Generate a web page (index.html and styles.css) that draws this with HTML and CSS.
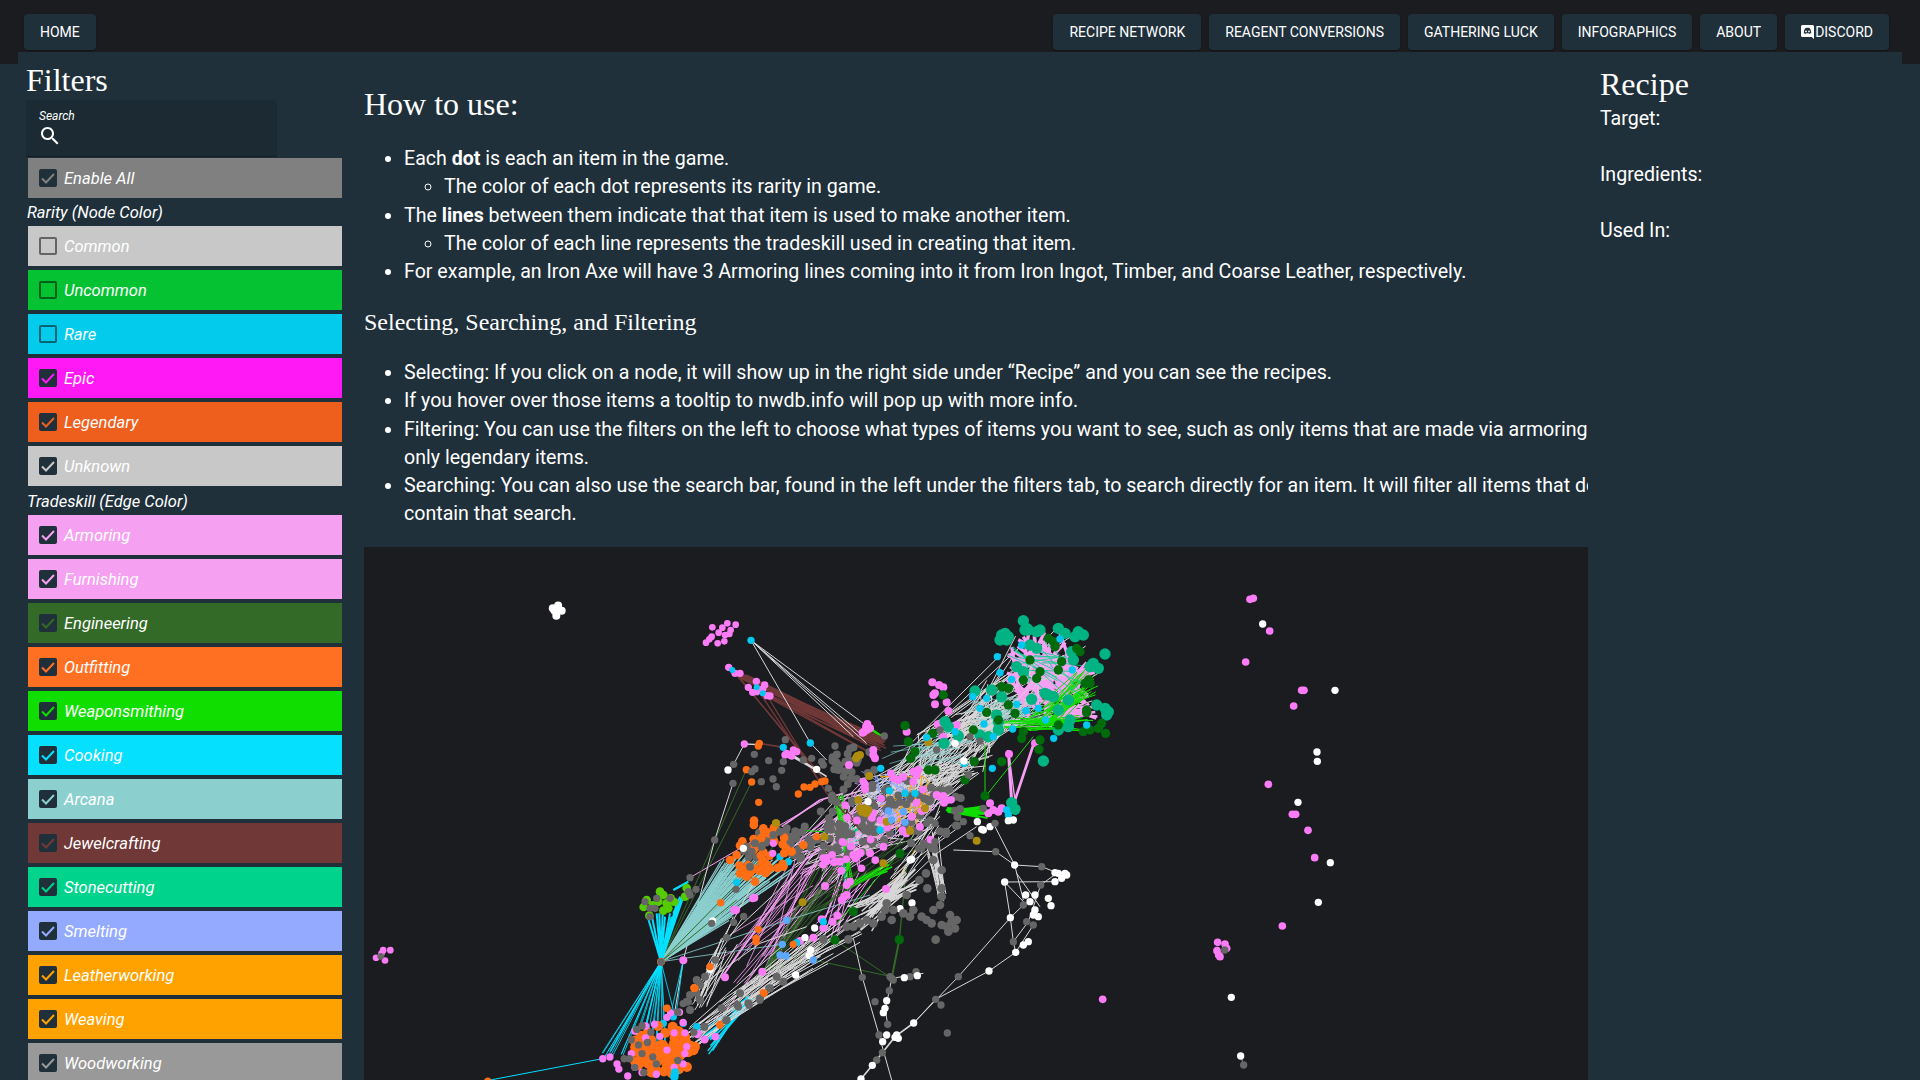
FILE: index.html
```html
<!DOCTYPE html>
<html lang="en">
<head>
<meta charset="utf-8">
<title>Recipe Network</title>
<link rel="stylesheet" href="styles.css">
</head>
<body>
<header class="topbar">
  <a class="navbtn">Home</a>
  <nav class="navgroup">
    <a class="navbtn">Recipe Network</a>
    <a class="navbtn">Reagent Conversions</a>
    <a class="navbtn">Gathering Luck</a>
    <a class="navbtn">Infographics</a>
    <a class="navbtn">About</a>
    <a class="navbtn"><svg class="discord" viewBox="0 0 14 14"><path class="discord-bg" d="M1.5 0h10A1.5 1.5 0 0 1 13 1.5V14l-2.4-2H1.5A1.5 1.5 0 0 1 0 10.5v-9A1.5 1.5 0 0 1 1.5 0z"/><path class="discord-face" d="M4.2 3.2c1.5-.5 3.1-.5 4.6 0 .9 1.300 1.400 2.900 1.400 4.800-.7.500-1.400.800-2 1l-.5-.8H5.300l-.5.8c-.7-.2-1.400-.5-2-1 0-1.900.5-3.500 1.400-4.800z"/><circle class="discord-bg" cx="5" cy="6.400" r=".9"/><circle class="discord-bg" cx="8" cy="6.400" r=".9"/></svg>Discord</a>
  </nav>
</header>
<div class="layout">
  <aside class="filters">
    <h2 class="title">Filters</h2>
    <div class="search">
      <span class="search-label">Search</span>
      <svg class="search-icon" viewBox="0 0 24 24"><path d="M15.500 14h-.79l-.28-.27C15.410 12.590 16 11.110 16 9.500 16 5.910 13.090 3 9.500 3S3 5.910 3 9.500 5.910 16 9.500 16c1.610 0 3.090-.59 4.230-1.570l.27.28v.79l5 4.990L20.490 19l-4.990-5zm-6 0C7.010 14 5 11.990 5 9.500S7.010 5 9.500 5 14 7.010 14 9.500 11.990 14 9.500 14z"/></svg>
    </div>
    <div class="row c-all"><span class="box on"><svg viewBox="0 0 18 18"><path d="M3 9.500l4 4 8-8.500"/></svg></span>Enable All</div>
    <div class="group-label">Rarity (Node Color)</div>
    <div class="group">
      <div class="row c-common"><span class="box"></span>Common</div>
      <div class="row c-uncommon"><span class="box"></span>Uncommon</div>
      <div class="row c-rare"><span class="box"></span>Rare</div>
      <div class="row c-epic"><span class="box on"><svg viewBox="0 0 18 18"><path d="M3 9.500l4 4 8-8.500"/></svg></span>Epic</div>
      <div class="row c-legendary"><span class="box on"><svg viewBox="0 0 18 18"><path d="M3 9.500l4 4 8-8.500"/></svg></span>Legendary</div>
      <div class="row c-common"><span class="box on"><svg viewBox="0 0 18 18"><path d="M3 9.500l4 4 8-8.500"/></svg></span>Unknown</div>
    </div>
    <div class="group-label second">Tradeskill (Edge Color)</div>
    <div class="group">
      <div class="row c-armoring"><span class="box on"><svg viewBox="0 0 18 18"><path d="M3 9.500l4 4 8-8.500"/></svg></span>Armoring</div>
      <div class="row c-armoring"><span class="box on"><svg viewBox="0 0 18 18"><path d="M3 9.500l4 4 8-8.500"/></svg></span>Furnishing</div>
      <div class="row c-engineering"><span class="box on"><svg viewBox="0 0 18 18"><path d="M3 9.500l4 4 8-8.500"/></svg></span>Engineering</div>
      <div class="row c-outfitting"><span class="box on"><svg viewBox="0 0 18 18"><path d="M3 9.500l4 4 8-8.500"/></svg></span>Outfitting</div>
      <div class="row c-weapon"><span class="box on"><svg viewBox="0 0 18 18"><path d="M3 9.500l4 4 8-8.500"/></svg></span>Weaponsmithing</div>
      <div class="row c-cooking"><span class="box on"><svg viewBox="0 0 18 18"><path d="M3 9.500l4 4 8-8.500"/></svg></span>Cooking</div>
      <div class="row c-arcana"><span class="box on"><svg viewBox="0 0 18 18"><path d="M3 9.500l4 4 8-8.500"/></svg></span>Arcana</div>
      <div class="row c-jewel"><span class="box on"><svg viewBox="0 0 18 18"><path d="M3 9.500l4 4 8-8.500"/></svg></span>Jewelcrafting</div>
      <div class="row c-stone"><span class="box on"><svg viewBox="0 0 18 18"><path d="M3 9.500l4 4 8-8.500"/></svg></span>Stonecutting</div>
      <div class="row c-smelting"><span class="box on"><svg viewBox="0 0 18 18"><path d="M3 9.500l4 4 8-8.500"/></svg></span>Smelting</div>
      <div class="row c-leather"><span class="box on"><svg viewBox="0 0 18 18"><path d="M3 9.500l4 4 8-8.500"/></svg></span>Leatherworking</div>
      <div class="row c-leather"><span class="box on"><svg viewBox="0 0 18 18"><path d="M3 9.500l4 4 8-8.500"/></svg></span>Weaving</div>
      <div class="row c-wood"><span class="box on"><svg viewBox="0 0 18 18"><path d="M3 9.500l4 4 8-8.500"/></svg></span>Woodworking</div>
    </div>
  </aside>
  <main class="content">
    <div class="help">
      <h1 class="title help-title">How to use:</h1>
      <ul>
        <li>Each <b>dot</b> is each an item in the game.
          <ul><li>The color of each dot represents its rarity in game.</li></ul>
        </li>
        <li>The <b>lines</b> between them indicate that that item is used to make another item.
          <ul><li>The color of each line represents the tradeskill used in creating that item.</li></ul>
        </li>
        <li>For example, an Iron Axe will have 3 Armoring lines coming into it from Iron Ingot, Timber, and Coarse Leather, respectively.</li>
      </ul>
      <h3 class="subtitle">Selecting, Searching, and Filtering</h3>
      <ul class="second-list">
        <li>Selecting: If you click on a node, it will show up in the right side under “Recipe” and you can see the recipes.</li>
        <li>If you hover over those items a tooltip to nwdb.info will pop up with more info.</li>
        <li>Filtering: You can use the filters on the left to choose what types of items you want to see, such as only items that are made via armoring or only legendary items.</li>
        <li>Searching: You can also use the search bar, found in the left under the filters tab, to search directly for an item. It will filter all items that do not contain that search.</li>
      </ul>
    </div>
    <svg id="graph" class="graph" viewBox="-828 -99 3672 1599" preserveAspectRatio="xMinYMin slice"></svg>
  </main>
  <aside class="recipe">
    <h2 class="title recipe-title">Recipe</h2>
    <p>Target:</p>
    <p>Ingredients:</p>
    <p>Used In:</p>
  </aside>
</div>
<script src="graph.js"></script>
</body>
</html>
```
FILE: styles.css
```css
* { box-sizing: border-box; }
html, body { margin: 0; height: 100%; overflow: hidden; }
body {
  background: #1f303b;
  color: #fff;
  font-family: Roboto, "Liberation Sans", sans-serif;
}
.topbar {
  height: 64px;
  background: #1b1c20;
  display: flex;
  justify-content: space-between;
  align-items: flex-start;
  padding: 14px 31px 0 24px;
}
.navgroup { display: flex; gap: 8px; }
.navbtn {
  height: 36px;
  display: flex;
  align-items: center;
  padding: 0 16px;
  background: #1f303b;
  border-radius: 4px;
  font-size: 14px;
  font-weight: 400;
  text-transform: uppercase;
  box-shadow: 0 1px 2px rgba(0, 0, 0, .3);
}
.discord { width: 14px; height: 14px; }
.discord-bg { fill: #fff; }
.discord-face { fill: #1f303b; }
.layout {
  margin: -12px 18px 0;
  height: 1028px;
  background: #1f303b;
  display: grid;
  grid-template-columns: 346px 1224px 1fr;
}
.title {
  font-family: "Liberation Serif", serif;
  font-size: 32px;
  font-weight: 400;
  line-height: 37px;
  margin: 0;
}
.filters { padding: 10px 0 0 8px; }
.search {
  width: 251px;
  height: 57px;
  margin-top: 1px;
  padding: 8px 0 0 13px;
  background: #1b2a33;
  border-bottom: 1px solid #121c23;
  border-radius: 4px 4px 0 0;
}
.search-label { display: block; font-size: 12px; font-style: italic; line-height: 16px; }
.search-icon { display: block; width: 24px; height: 24px; margin: 0 0 0 -1px; fill: #fff; }
.row {
  width: 314px;
  height: 40px;
  margin-left: 2px;
  padding-left: 11px;
  display: flex;
  align-items: center;
  gap: 7px;
  font-size: 16.5px;
  font-style: italic;
  background: var(--c);
  color: #fff;
}
.search + .row { margin-top: 1px; }
.group { display: flex; flex-direction: column; gap: 4px; }
.group-label { margin-left: 1px; height: 28px; font-size: 16.5px; font-style: italic; line-height: 30px; }
.group-label.second { height: 29px; line-height: 31px; }
.box {
  flex: none;
  width: 18px;
  height: 18px;
  border-radius: 2px;
  border: 2px solid rgba(0, 0, 0, .5);
}
.box.on { border: 0; background: #1f303b; }
.box svg { display: block; width: 18px; height: 18px; fill: none; stroke: var(--c); stroke-width: 2; }
.c-all { --c: #808080; }
.c-common { --c: #c8c8c8; }
.c-uncommon { --c: #05c233; }
.c-rare { --c: #02cbec; }
.c-epic { --c: #ff1af5; }
.c-legendary { --c: #ee5e1c; }
.c-armoring { --c: #f6a0f2; }
.c-engineering { --c: #336a27; }
.c-outfitting { --c: #ff7022; }
.c-weapon { --c: #10dd00; }
.c-cooking { --c: #05e0ff; }
.c-arcana { --c: #8bcfcf; }
.c-jewel { --c: #713838; }
.c-stone { --c: #00d48c; }
.c-smelting { --c: #94aaff; }
.c-leather { --c: #ffa200; }
.c-wood { --c: #999999; }
.content { overflow: hidden; min-width: 0; }
.help { width: 1278px; font-size: 19.6px; line-height: 28.3px; }
.help-title { margin: 34px 0 0; }
.help ul { margin: 0; padding-left: 40px; }
.help > ul { margin: 22px 0 22px; }
.help > ul.second-list { margin: 22.500px 0 0; }
.subtitle {
  font-family: "Liberation Serif", serif;
  font-size: 24px;
  font-weight: 400;
  line-height: 28px;
  margin: 0;
}
.graph { display: block; width: 1224px; height: 533px; background: #1b1c20; margin-top: 18px; }
.recipe { padding: 14px 0 0 12px; }
.recipe-title { margin-bottom: 2px; }
.recipe p { margin: 0 0 27.7px; font-size: 19.6px; line-height: 28.3px; }
```
FILE: graph.js
```js
(function () {
  var svg = document.getElementById('graph');
  var NS = 'http://www.w3.org/2000/svg';
  var seed = 12345;
  function R() {
    seed |= 0; seed = seed + 0x6D2B79F5 | 0;
    var t = Math.imul(seed ^ seed >>> 15, 1 | seed);
    t = t + Math.imul(t ^ t >>> 7, 61 | t) ^ t;
    return ((t ^ t >>> 14) >>> 0) / 4294967296;
  }
  var N = { pink: '#fb7cf6', white: '#ffffff', gray: '#666666', orange: '#ff6e14', cyan: '#00c8f0', green: '#006b0b', teal: '#00b383', lime: '#55cc00', gold: '#ad8c0e', blue: '#5aa8ff' };
  var E = { white: '#d8d8d8', pink: '#f5a0f2', lime: '#10dd00', cyan: '#05e0ff', arcana: '#8bcfcf', brown: '#713838', dgreen: '#336a27', orange: '#ffa200', peri: '#94aaff', stone: '#00d48c' };
  var nodes = [], edges = [];
  function pts(c, list, r) { list.forEach(function (p) { nodes.push([p[0], p[1], N[c], r || 11.5]); }); }
  function inEll(g) {
    var a = R() * 6.283, d = Math.sqrt(R());
    return [g[0] + Math.cos(a) * d * g[2], g[1] + Math.sin(a) * d * g[3]];
  }
  function blob(c, n, g, r) { for (var i = 0; i < n; i++) { var p = inEll(g); nodes.push([p[0], p[1], N[c], r || 11.5]); } }
  function fan(c, w, n, A, B) {
    for (var i = 0; i < n; i++) {
      var a = inEll(A), b = inEll(B);
      edges.push([a[0], a[1], b[0], b[1], E[c], w]);
    }
  }
  function path(c, w, list) {
    for (var i = 0; i < list.length - 1; i++) edges.push([list[i][0], list[i][1], list[i + 1][0], list[i + 1][1], E[c], w]);
  }
  function z3(l) { return l.map(function (p) { return [p[0] * 1.071 - 840, p[1] * 1.034 - 120]; }); }
  function z6(l) { return l.map(function (p) { return [p[0] + 1380, p[1] - 60]; }); }

  var right = [1220, 300, 175, 160], midR = [930, 520, 130, 90], cen = [740, 690, 170, 110], left = [560, 830, 120, 80];

  /* ---- edges ---- */
  fan('white', 3, 42, midR, right);
  fan('white', 3, 60, [960, 470, 80, 70], [1100, 360, 90, 80]);
  fan('arcana', 2, 22, [1050, 400, 80, 60], [1250, 380, 80, 70]);
  fan('pink', 10, 70, [1210, 270, 115, 125], [1230, 320, 125, 115]);
  fan('pink', 8, 14, [1340, 395, 50, 25], [1250, 400, 50, 30]);
  fan('pink', 8, 8, [1340, 260, 40, 25], [1270, 310, 40, 30]);
  fan('white', 2.5, 12, [1160, 330, 90, 90], [1220, 250, 90, 70]);
  fan('lime', 3, 32, [1210, 420, 60, 30], [1340, 310, 35, 60]);
  fan('lime', 3, 20, [1140, 430, 60, 30], [1320, 430, 50, 25]);
  fan('stone', 2.5, 18, [1240, 300, 100, 100], [1160, 230, 70, 70]);
  fan('white', 3, 85, cen, midR);
  fan('white', 3, 60, cen, left);
  fan('arcana', 2, 20, [800, 540, 80, 50], [960, 500, 80, 60]);
  fan('peri', 2.5, 30, [720, 640, 130, 90], [780, 700, 130, 70]);
  fan('orange', 3, 18, [820, 640, 100, 50], [780, 720, 60, 60]);
  path('orange', 3, [[720, 590], [770, 590], [850, 590], [890, 630], [840, 660], [790, 650], [720, 680]]);
  path('orange', 3, [[830, 590], [800, 640]]); path('orange', 3, [[845, 585], [840, 650]]);
  path('orange', 3, [[800, 860], [740, 930]]); path('orange', 3, [[830, 800], [760, 920]]); path('orange', 3, [[720, 740], [700, 790]]);
  fan('stone', 2.5, 20, [640, 740, 50, 30], [620, 790, 40, 30]);
  fan('stone', 2.5, 8, [610, 860, 10, 40], [620, 920, 8, 10]);
  fan('pink', 3, 36, cen, left);
  fan('pink', 2.5, 22, [330, 1130, 90, 100], [530, 870, 90, 60]);
  fan('pink', 3, 12, [560, 1050, 40, 40], [650, 880, 60, 60]);
  fan('pink', 2.5, 6, [250, 1190, 5, 5], [510, 810, 30, 30]);
  path('pink', 3, [[150, 893], [360, 770], [550, 660]]);
  path('pink', 5, [[425, 740], [540, 660], [610, 640]]);
  path('pink', 3, [[230, 1330], [560, 880]]);
  path('pink', 9, [[1105, 510], [1115, 665]]); path('pink', 8, [[1185, 480], [1125, 660]]); path('pink', 4, [[1105, 510], [1125, 660]]);
  fan('lime', 5, 16, [925, 690, 8, 8], [1030, 695, 22, 28]);
  fan('lime', 5, 8, [615, 925, 10, 8], [740, 860, 18, 14]);
  fan('lime', 3, 8, [640, 910, 20, 15], [580, 650, 30, 20]);
  path('lime', 8, [[690, 445], [725, 470]]);
  path('lime', 3, [[1035, 495], [1035, 645]]); path('lime', 3, [[1180, 470], [1040, 645]]);
  path('lime', 3, [[590, 1030], [760, 840]]); path('lime', 3, [[470, 750], [620, 760]]);
  fan('dgreen', 2.5, 14, [375, 1170, 6, 6], [600, 860, 70, 70]);
  fan('dgreen', 2.5, 6, [480, 1000, 40, 40], [800, 800, 50, 40]);
  path('dgreen', 3, [[375, 1172], [520, 1140], [755, 1190]]);
  path('dgreen', 3, [[375, 1172], [585, 1080], [755, 1195]]);
  path('dgreen', 6, [[778, 1079], [755, 1195]]);
  path('dgreen', 4, [[778, 1079], [800, 850]]);
  path('dgreen', 3, [[63, 1145], [319, 569]]); path('dgreen', 3, [[63, 1145], [335, 606]]);
  path('brown', 4, [[285, 280], [530, 570], [670, 760]]);
  path('brown', 4, [[292, 285], [500, 540]]);
  path('brown', 4, [[380, 345], [560, 640], [665, 755]]);
  path('brown', 4, [[360, 340], [535, 600]]);
  fan('brown', 5, 12, [310, 290, 15, 8], [720, 490, 50, 16]);
  fan('brown', 4, 6, [370, 335, 15, 12], [700, 500, 40, 30]);
  path('brown', 5, [[358, 490], [430, 502]]);
  path('white', 3, [[333, 181], [670, 430]]); path('white', 3, [[333, 181], [660, 460]]); path('white', 3, [[333, 181], [680, 490]]);
  path('white', 3, [[333, 181], [511, 489], [560, 540]]); path('white', 3, [[333, 181], [640, 470]]);
  path('white', 3, [[313, 492], [281, 553], [264, 570]]); path('white', 4, [[313, 492], [358, 494]]);
  path('white', 7, [[450, 525], [530, 570]]); path('white', 5, [[450, 520], [560, 590]]);
  path('white', 3, [[279, 610], [224, 780], [130, 1140], [100, 1320]]);
  fan('arcana', 3.5, 75, [63, 1145, 1, 1], [350, 860, 115, 55]);
  fan('arcana', 3.5, 18, [63, 1145, 1, 1], [225, 990, 65, 45]);
  path('dgreen', 3, [[63, 1145], [290, 960]]); path('dgreen', 3, [[63, 1145], [400, 800]]);
  path('arcana', 2.5, [[63, 1145], [440, 1021], [690, 945]]);
  path('arcana', 2.5, [[63, 1145], [427, 1093]]);
  [[20, 1000], [35, 1005], [50, 1000], [58, 1000], [68, 1000], [75, 1010], [90, 1000], [95, 1010], [105, 990], [115, 970], [125, 950], [132, 945]].forEach(function (p) {
    edges.push([63, 1145, p[0], p[1], E.cyan, 6]);
  });
  path('cyan', 7, [[100, 930], [145, 905]]); path('cyan', 5, [[120, 950], [100, 1000]]);
  fan('cyan', 2.5, 24, [63, 1145, 1, 1], [0, 1420, 115, 15]);
  path('cyan', 2.5, [[130, 1140], [95, 1290]]); path('cyan', 2.5, [[130, 1140], [110, 1290]]); path('cyan', 2.5, [[63, 1145], [100, 1290]]);
  path('cyan', 3, [[-470, 1504], [-112, 1436]]);
  path('cyan', 3, [[-108, 1434], [63, 1150]]);
  fan('cyan', 4, 12, [200, 1390, 40, 35], [330, 1260, 10, 16]);
  fan('white', 3, 22, [150, 1380, 30, 40], [500, 1120, 90, 60]);
  fan('white', 3, 16, [290, 1260, 60, 30], [620, 1050, 60, 50]);
  fan('white', 3, 14, [180, 1270, 24, 40], [260, 1120, 40, 60]);
  path('white', 3, [[150, 1240], [360, 1090], [500, 1040]]);
  path('white', 3, [[180, 1260], [280, 1010]]); path('white', 3, [[200, 1160], [280, 1020], [340, 910]]);
  path('white', 3, [[260, 1075], [470, 880]]); path('white', 3, [[150, 1250], [310, 1010]]);
  fan('white', 4, 30, [670, 1010, 60, 50], [810, 900, 40, 40]);
  fan('white', 3, 20, [880, 800, 20, 50], [905, 940, 15, 30]);
  fan('white', 3, 12, [760, 880, 50, 40], [910, 720, 70, 40]);
  path('white', 3, [[640, 1075], [667, 1192], [717, 1365], [755, 1500]]);
  path('white', 3, [[700, 1000], [890, 820], [1010, 740]]);
  path('white', 3, [[940, 810], [1067, 815], [1124, 855]]);
  path('white', 3, [[1060, 730], [1124, 855], [1205, 860], [1255, 880]]);
  path('white', 3, [[1124, 855], [1150, 960]]); path('white', 3, [[1094, 906], [1245, 905]]);
  path('white', 3, [[1094, 906], [1111, 1013], [1120, 1085], [1127, 1117]]);
  path('white', 3, [[1094, 906], [1160, 975]]); path('white', 3, [[1130, 880], [1200, 980]]);
  path('white', 3, [[1202, 915], [1165, 1025], [1120, 1085]]);
  path('white', 3, [[1150, 975], [1111, 1013], [955, 1190], [821, 1329]]);
  path('white', 3, [[1180, 1035], [1127, 1117], [1047, 1173], [887, 1258], [821, 1329]]);
  path('white', 5, [[821, 1329], [765, 1370], [727, 1418], [697, 1456], [663, 1497]]);
  path('white', 3, [[743, 1333], [735, 1285]]);
  path('white', 3, [[850, 1180], [755, 1195], [748, 1232], [735, 1290]]);
  path('white', 3, [[1250, 880], [1202, 915]]);
  z6([[422, 1488], [431, 1515]]).reduce(function (a, b) { path('white', 2, [a, b]); return b; });

  /* ---- nodes ---- */
  pts('pink', [[217, 142], [247, 143], [262, 130], [287, 134], [272, 150], [255, 165], [236, 158], [215, 170], [198, 188], [233, 190], [253, 184], [268, 162], [208, 178]], 10);
  pts('cyan', [[333, 181]], 11);
  pts('pink', [[266, 262], [285, 280], [300, 280], [349, 304], [325, 322], [374, 315], [360, 330], [338, 337], [350, 335], [381, 347], [390, 348], [368, 328]], 11);
  pts('cyan', [[277, 270], [350, 322], [368, 340]], 9);

  // centre scatter
  blob('gray', 95, [760, 700, 220, 130], 12);
  blob('gray', 50, [560, 790, 130, 60], 12);
  blob('gray', 24, [640, 550, 70, 50], 12);
  blob('pink', 20, [760, 690, 190, 120]);
  blob('pink', 18, [620, 830, 90, 50]);
  pts('pink', [[678, 440], [672, 455], [682, 432], [668, 458], [690, 445], [680, 450], [700, 525], [705, 535], [700, 510], [760, 595], [775, 600], [790, 590], [820, 575], [835, 570], [830, 585], [900, 650], [890, 645], [910, 648], [620, 915], [630, 905], [612, 950], [605, 960], [620, 945], [738, 927], [640, 825], [660, 820], [690, 820], [600, 845], [730, 800], [840, 740], [815, 710], [845, 693], [627, 555], [675, 628], [700, 700], [555, 918], [343, 953], [288, 990], [283, 990], [130, 1141], [255, 1192], [367, 1175], [592, 1007], [545, 1018], [550, 1044], [578, 1025], [520, 1073], [480, 1083]], 12);
  pts('white', [[530, 568], [684, 665], [815, 838], [810, 840], [816, 969], [780, 986], [218, 1023], [210, 1168], [512, 1110], [508, 1127], [524, 1044], [495, 1073], [467, 1185]], 11);
  pts('gold', [[652, 528], [648, 535], [660, 525], [665, 695], [678, 700], [672, 685], [660, 685], [685, 690], [688, 588], [655, 660], [740, 725], [810, 753], [730, 850], [553, 770], [488, 967], [1010, 782], [865, 487], [408, 730], [855, 685]], 12);
  pts('blue', [[745, 693], [790, 695], [795, 727], [440, 1021], [427, 1093], [420, 1125], [438, 1128], [520, 1140], [755, 720]], 11);
  pts('cyan', [[722, 565], [748, 632], [825, 640], [720, 750], [795, 640], [430, 502], [511, 489], [420, 830], [445, 845], [290, 907], [470, 1088], [550, 1025]], 11);

  // outer-left scrap
  pts('orange', [[358, 490], [355, 498], [319, 569], [335, 606], [356, 667], [475, 642], [492, 621], [510, 622], [525, 612], [545, 605], [555, 603], [242, 968], [355, 1048], [348, 1075], [348, 1085], [460, 1093], [530, 770], [370, 1238], [163, 1222], [240, 1333], [210, 1160]], 11);
  pts('pink', [[313, 492], [440, 520], [460, 510], [450, 525], [470, 515], [435, 525], [455, 528]], 11);
  pts('gray', [[436, 479], [343, 523], [386, 542], [430, 545], [425, 571], [345, 567], [335, 575], [281, 553], [279, 610], [364, 605], [399, 597], [409, 620], [224, 780], [150, 893], [288, 928], [281, 1027], [311, 1009], [260, 1073], [226, 1140], [215, 1030], [585, 498], [490, 540], [515, 535], [545, 545], [550, 555], [565, 625]], 11);
  pts('white', [[264, 570], [310, 805]], 11);
  // orange cluster
  blob('gray', 16, [410, 770, 60, 32], 12);
  blob('gray', 6, [340, 810, 30, 30], 12);
  blob('orange', 36, [360, 810, 85, 80], 13);
  pts('orange', [[342, 722], [370, 745], [385, 760], [290, 825], [270, 840], [300, 880], [320, 890], [345, 905], [430, 860], [455, 815], [490, 795], [310, 870], [330, 880]], 13);
  pts('gray', [[345, 790], [365, 800], [320, 800], [335, 815], [420, 755], [440, 745], [400, 765], [330, 860]], 12);
  pts('pink', [[400, 790], [398, 820]], 11);
  pts('gold', [[408, 730]], 12);
  pts('white', [[310, 805]], 11);
  // right cluster
  pts('pink', [[877, 307], [897, 315], [910, 322], [885, 340], [880, 345], [885, 373], [920, 367], [925, 393], [893, 433], [950, 435], [800, 455], [910, 470], [1107, 522], [1185, 490], [1050, 670], [1060, 690], [1045, 700], [1075, 695], [1085, 685]], 12);
  pts('teal', [[1085, 165], [1100, 180], [1095, 160], [1080, 180], [1105, 170], [1090, 175], [1155, 150], [1165, 150], [1150, 122], [1190, 155], [1200, 150], [1255, 145], [1275, 160], [1315, 155], [1330, 165], [1305, 170], [1170, 195], [1190, 205], [1295, 215], [1300, 240], [1130, 260], [1150, 275], [1360, 250], [1375, 265], [1395, 222], [1005, 333], [1055, 330], [1085, 350], [1225, 345], [1240, 350], [1175, 358], [1285, 360], [1255, 390], [1070, 405], [1075, 425], [1290, 420], [1285, 440], [1255, 450], [915, 425], [925, 440], [912, 490], [955, 468], [1020, 465], [1045, 470], [1075, 450], [1370, 375], [1395, 385], [1405, 395], [1400, 405], [1210, 543], [1115, 668], [1125, 688], [1160, 145], [1215, 340], [1350, 260]], 17);
  pts('green', [[1225, 175], [1245, 200], [1170, 240], [1265, 245], [1255, 270], [1310, 205], [1320, 215], [1345, 300], [1335, 310], [1340, 398], [1330, 455], [1350, 450], [1385, 430], [1397, 460], [1375, 445], [1150, 300], [1190, 295], [1200, 275], [1085, 320], [1105, 325], [1105, 375], [1125, 400], [1075, 420], [1040, 397], [1255, 435], [1150, 455], [1145, 475], [1200, 480], [1197, 508], [1085, 545], [1035, 648], [795, 437], [878, 460], [865, 570], [885, 570], [975, 600], [1003, 545], [1000, 450], [910, 345], [805, 485], [825, 515], [812, 535], [780, 820], [1350, 310], [1340, 390], [1240, 185], [585, 1080], [640, 995], [778, 1079]], 14);
  pts('cyan', [[1145, 195], [1260, 177], [1072, 230], [1080, 278], [1115, 298], [1297, 270], [1130, 373], [1158, 392], [1195, 385], [1217, 420], [1340, 435], [1241, 475], [1118, 447], [1032, 432], [1020, 385], [998, 350], [1040, 355], [1060, 470], [945, 455], [860, 472], [1100, 690], [1105, 705], [1057, 565], [972, 550]], 11);
  pts('white', [[945, 490], [972, 543], [1012, 725], [1025, 748], [1030, 750], [1050, 740], [1105, 722], [1120, 720]], 11);
  pts('gray', [[1030, 685], [985, 585], [1020, 483], [990, 470], [890, 510], [900, 450], [733, 468], [990, 767], [970, 725], [1065, 730], [870, 720], [860, 730], [885, 730], [885, 785]], 11);
  // lower right wires
  pts('gray', [[1067, 815], [1205, 860], [1202, 915], [1150, 975], [1160, 1025], [1180, 1035], [1120, 1085], [955, 1190], [887, 1258], [903, 1275], [922, 1359], [727, 1418], [743, 1333], [717, 1365], [705, 1265], [710, 1440], [667, 1192], [755, 1195], [748, 1232], [810, 1190], [828, 1175], [750, 1190], [760, 1200]], 11);
  pts('white', [[1124, 855], [1094, 906], [1245, 878], [1275, 880], [1265, 895], [1245, 905], [1280, 885], [1255, 880], [1157, 945], [1185, 945], [1170, 965], [1225, 955], [1233, 977], [1185, 990], [1195, 1010], [1180, 1005], [1111, 1013], [1165, 1085], [1150, 1095], [1127, 1117], [1047, 1173], [821, 1329], [793, 1193], [832, 1187], [770, 1365], [765, 1372], [775, 1375], [728, 1385], [740, 1365], [697, 1456], [663, 1497], [740, 1262], [735, 1285], [730, 1298]], 11);
  pts('gray', [[935, 1025], [950, 1020], [920, 1040], [945, 1045], [905, 1035], [887, 1079], [905, 925], [905, 950], [900, 975], [880, 990], [860, 1020], [875, 1030], [845, 1010], [820, 990], [790, 1000], [760, 990], [735, 990], [725, 1010], [700, 1030], [680, 1020], [660, 1030], [640, 1040], [905, 870], [858, 880], [838, 900], [862, 925], [800, 945], [740, 970], [755, 1020], [810, 1010], [880, 840], [930, 1005], [925, 1055], [625, 1078], [550, 1078], [620, 1040]], 13);
  // lower band
  pts('gray', [[300, 1240], [245, 1285], [180, 1260], [170, 1240], [150, 1245], [140, 1265], [325, 1270], [360, 1255], [390, 1225], [410, 1190], [430, 1205], [195, 1190], [180, 1215], [292, 1275], [260, 1320], [193, 1340], [150, 1290], [170, 1200]], 12);
  pts('pink', [[227, 1370], [195, 1378], [175, 1360]], 11);
  // lime cluster
  pts('lime', [[11, 981], [28, 1007], [38, 976], [70, 945], [92, 955], [70, 992], [103, 966], [140, 924], [135, 950], [55, 965], [80, 970], [20, 960], [60, 935], [85, 985]], 13);
  pts('gray', [[15, 965], [30, 985], [50, 955], [90, 955], [145, 935], [150, 945], [168, 928], [30, 1010], [45, 985]], 11);
  pts('orange', [[63, 1145]], 12); pts('gray', [[63, 1146]], 11);
  // bottom left
  pts('cyan', [[100, 1310], [70, 1330], [130, 1330], [170, 1340]], 11);
  pts('orange', [[80, 1285], [165, 1225]], 11);
  blob('orange', 100, [72, 1410, 98, 76], 15);
  pts('pink', z3([[860, 1385], [870, 1372], [895, 1370], [905, 1400], [680, 1505], [700, 1500], [720, 1520], [725, 1535], [770, 1425], [800, 1410], [825, 1405], [880, 1430], [915, 1470], [910, 1490], [840, 1440], [800, 1445], [760, 1490], [770, 1530], [830, 1550], [880, 1530], [905, 1520], [995, 1441], [965, 1450], [945, 1435], [860, 1480], [910, 1430], [790, 1545], [750, 1555]]), 11);
  pts('gray', z3([[760, 1450], [780, 1465], [740, 1505], [790, 1490], [820, 1500], [830, 1520], [890, 1510], [790, 1410], [815, 1428], [775, 1420], [805, 1458], [770, 1530], [795, 1545], [755, 1505], [920, 1340], [905, 1345], [890, 1370], [935, 1428], [965, 1412], [1025, 1395], [1060, 1355], [1090, 1350], [1120, 1335], [1145, 1300]]), 11);
  pts('cyan', [[103, 1490], [105, 1478]], 13);
  pts('orange', z3([[1008, 1408], [860, 1358], [935, 1300], [1132, 1315], [358, 1570]]), 11);
  pts('pink', z3([[1100, 1040], [1050, 1075]]), 11);

  // isolated
  pts('white', z3([[552, 200], [545, 205], [565, 205], [550, 220], [555, 190], [540, 198]]), 12);
  pts('pink', z3([[65, 1190], [85, 1190], [45, 1212], [70, 1220], [60, 1200]]), 10);
  pts('gray', z3([[58, 1208]]), 10);
  pts('pink', z6([[450, 118], [460, 115], [509, 213], [437, 306], [605, 391], [612, 391], [581, 438], [505, 673], [577, 763], [587, 763], [624, 811], [644, 893], [547, 1098], [353, 1147], [375, 1152], [351, 1172], [380, 1165], [356, 1185], [360, 1190], [8, 1318]]), 11.5);
  pts('white', z6([[488, 192], [705, 391], [651, 576], [652, 604], [594, 727], [691, 908], [655, 1027], [394, 1312], [422, 1488]]), 11);
  pts('gray', z6([[374, 1170], [431, 1515]]), 11);

  var frag = document.createDocumentFragment();
  edges.forEach(function (e) {
    var l = document.createElementNS(NS, 'line');
    l.setAttribute('x1', e[0].toFixed(1)); l.setAttribute('y1', e[1].toFixed(1));
    l.setAttribute('x2', e[2].toFixed(1)); l.setAttribute('y2', e[3].toFixed(1));
    l.setAttribute('stroke', e[4]); l.setAttribute('stroke-width', e[5]);
    frag.appendChild(l);
  });
  nodes.forEach(function (n) {
    var c = document.createElementNS(NS, 'circle');
    c.setAttribute('cx', n[0].toFixed(1)); c.setAttribute('cy', n[1].toFixed(1));
    c.setAttribute('r', n[3]); c.setAttribute('fill', n[2]);
    frag.appendChild(c);
  });
  svg.appendChild(frag);
})();
```
